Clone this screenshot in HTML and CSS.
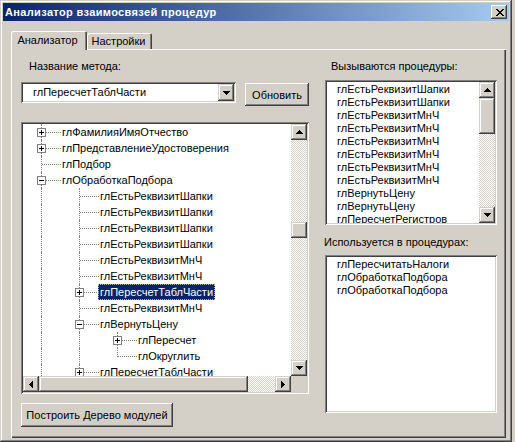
FILE: index.html
```html
<!DOCTYPE html>
<html lang="ru">
<head>
<meta charset="utf-8">
<title>Анализатор взаимосвязей процедур</title>
<link rel="stylesheet" href="styles.css">
</head>
<body>
<div class="window">
  <div class="titlebar">
    <span class="title">Анализатор взаимосвязей процедур</span>
    <span class="close"><svg width="8" height="7" viewBox="0 0 8 7" shape-rendering="crispEdges"><path d="M0 0h2v1H0zM6 0h2v1H6zM1 1h2v1H1zM5 1h2v1H5zM2 2h4v1H2zM3 3h2v1H3zM2 4h4v1H2zM1 5h2v1H1zM5 5h2v1H5zM0 6h2v1H0zM6 6h2v1H6z"/></svg></span>
  </div>
  <div class="client">
    <div class="tabs">
      <div class="tab active">Анализатор</div>
      <div class="tab">Настройки</div>
    </div>
    <div class="panel">
      <div class="left">
        <div class="label">Название метода:</div>
        <div class="combo-row">
          <div class="combo sunken">
            <span class="combo-text">глПересчетТаблЧасти</span>
            <span class="sbtn dd"><svg width="7" height="4" viewBox="0 0 7 4" shape-rendering="crispEdges"><path d="M0 0h7v1H6v1H5v1H4v1H3V3H2V2H1V1H0z"/></svg></span>
          </div>
          <div class="btn refresh">Обновить</div>
        </div>
        <div class="tree sunken">
          <div class="tree-main">
            <div class="rows">
              <div class="row"><span class="cell vf c"><i class="box plus"></i></span><span class="txt">глФамилияИмяОтчество</span></div>
              <div class="row"><span class="cell vf c"><i class="box plus"></i></span><span class="txt">глПредставлениеУдостоверения</span></div>
              <div class="row"><span class="cell vf c"></span><span class="txt">глПодбор</span></div>
              <div class="row"><span class="cell vf c"><i class="box"></i></span><span class="txt">глОбработкаПодбора</span></div>
              <div class="row"><span class="cell vf"></span><span class="cell vf c"></span><span class="txt">глЕстьРеквизитШапки</span></div>
              <div class="row"><span class="cell vf"></span><span class="cell vf c"></span><span class="txt">глЕстьРеквизитШапки</span></div>
              <div class="row"><span class="cell vf"></span><span class="cell vf c"></span><span class="txt">глЕстьРеквизитШапки</span></div>
              <div class="row"><span class="cell vf"></span><span class="cell vf c"></span><span class="txt">глЕстьРеквизитШапки</span></div>
              <div class="row"><span class="cell vf"></span><span class="cell vf c"></span><span class="txt">глЕстьРеквизитМнЧ</span></div>
              <div class="row"><span class="cell vf"></span><span class="cell vf c"></span><span class="txt">глЕстьРеквизитМнЧ</span></div>
              <div class="row"><span class="cell vf"></span><span class="cell vf c"><i class="box plus"></i></span><span class="txt sel">глПересчетТаблЧасти</span></div>
              <div class="row"><span class="cell vf"></span><span class="cell vf c"></span><span class="txt">глЕстьРеквизитМнЧ</span></div>
              <div class="row"><span class="cell vf"></span><span class="cell vf c"><i class="box"></i></span><span class="txt">глВернутьЦену</span></div>
              <div class="row"><span class="cell vf"></span><span class="cell vf"></span><span class="cell vf c"><i class="box plus"></i></span><span class="txt">глПересчет</span></div>
              <div class="row"><span class="cell vf"></span><span class="cell vf"></span><span class="cell vh c"></span><span class="txt">глОкруглить</span></div>
              <div class="row"><span class="cell vf"></span><span class="cell vf c"><i class="box plus"></i></span><span class="txt">глПересчетТаблЧасти</span></div>
            </div>
            <div class="vscroll">
              <span class="sbtn"><svg width="7" height="4" viewBox="0 0 7 4" shape-rendering="crispEdges"><path d="M3 0h1v1h1v1h1v1h1v1H0V3h1V2h1V1h1z"/></svg></span>
              <div class="track vtrack"><span class="thumb tree-thumb"></span></div>
              <span class="sbtn"><svg width="7" height="4" viewBox="0 0 7 4" shape-rendering="crispEdges"><path d="M0 0h7v1H6v1H5v1H4v1H3V3H2V2H1V1H0z"/></svg></span>
            </div>
          </div>
          <div class="hrow">
            <div class="hscroll">
              <span class="sbtn"><svg width="4" height="7" viewBox="0 0 4 7" shape-rendering="crispEdges"><path d="M3 0h1v7H3V6H2V5H1V4H0V3h1V2h1V1h1z"/></svg></span>
              <span class="thumb hthumb"></span>
              <span class="track htrack"></span>
              <span class="sbtn"><svg width="4" height="7" viewBox="0 0 4 7" shape-rendering="crispEdges"><path d="M0 0h1v1h1v1h1v1h1v1H3v1H2v1H1v1H0z"/></svg></span>
            </div>
            <div class="corner"></div>
          </div>
        </div>
        <div class="btn build">Построить Дерево модулей</div>
      </div>
      <div class="right">
        <div class="label indent">Вызываются процедуры:</div>
        <div class="list sunken list1">
          <div class="items">
            <div>глЕстьРеквизитШапки</div>
            <div>глЕстьРеквизитШапки</div>
            <div>глЕстьРеквизитМнЧ</div>
            <div>глЕстьРеквизитМнЧ</div>
            <div>глЕстьРеквизитМнЧ</div>
            <div>глЕстьРеквизитМнЧ</div>
            <div>глЕстьРеквизитМнЧ</div>
            <div>глЕстьРеквизитМнЧ</div>
            <div>глВернутьЦену</div>
            <div>глВернутьЦену</div>
            <div>глПересчетРегистров</div>
          </div>
          <div class="vscroll">
            <span class="sbtn"><svg width="7" height="4" viewBox="0 0 7 4" shape-rendering="crispEdges"><path d="M3 0h1v1h1v1h1v1h1v1H0V3h1V2h1V1h1z"/></svg></span>
            <div class="track vtrack"><span class="thumb list-thumb"></span></div>
            <span class="sbtn"><svg width="7" height="4" viewBox="0 0 7 4" shape-rendering="crispEdges"><path d="M0 0h7v1H6v1H5v1H4v1H3V3H2V2H1V1H0z"/></svg></span>
          </div>
        </div>
        <div class="label label2">Используется в процедурах:</div>
        <div class="list sunken list2">
          <div class="items">
            <div>глПересчитатьНалоги</div>
            <div>глОбработкаПодбора</div>
            <div>глОбработкаПодбора</div>
          </div>
        </div>
      </div>
    </div>
  </div>
</div>
</body>
</html>
```

FILE: styles.css
```css
* { box-sizing: border-box; }
html, body { margin: 0; padding: 0; }
body {
  width: 515px;
  height: 442px;
  overflow: hidden;
  background: #d4d0c8;
  font-family: "Liberation Sans", Arial, sans-serif;
  font-size: 11px;
  color: #000;
}
.window {
  width: 512px;
  height: 442px;
  padding: 3px;
  background: #d4d0c8;
  box-shadow: inset -1px -1px #404040, inset 1px 1px #d4d0c8, inset -2px -2px #808080, inset 2px 2px #fff;
  display: flex;
  flex-direction: column;
}
.titlebar {
  flex: none;
  height: 18px;
  display: flex;
  align-items: center;
  justify-content: space-between;
  padding: 0 2px;
  background: linear-gradient(to right, #0a246a, #a6caf0);
}
.title {
  color: #fff;
  font-weight: bold;
  font-size: 11px;
  letter-spacing: 0.35px;
}
.close {
  width: 16px;
  height: 14px;
  display: flex;
  align-items: center;
  justify-content: center;
  padding-left: 1px;
  background: #d4d0c8;
  box-shadow: inset -1px -1px #404040, inset 1px 1px #fff, inset -2px -2px #808080;
}
.client {
  flex: 1;
  padding: 10px 0 0 8px;
  display: flex;
  flex-direction: column;
}
.tabs {
  flex: none;
  height: 19px;
  margin-bottom: -1px;
  display: flex;
  align-items: flex-start;
  position: relative;
  z-index: 1;
}
.tab {
  height: 16px;
  margin-top: 2px;
  width: 65px;
  line-height: 16px;
  text-align: center;
  padding-right: 2px;
  background: #d4d0c8;
  border-radius: 2px 2px 0 0;
  box-shadow: inset 1px 1px #fff, inset -1px 0 #404040, inset -2px 0 #808080;
}
.tab.active {
  height: 19px;
  margin-top: 0;
  width: 76px;
  line-height: 18px;
  padding-right: 3px;
}
.panel {
  flex: none;
  width: 495px;
  height: 389px;
  padding: 11px 9px 0 10px;
  display: flex;
  box-shadow: inset 1px 1px #fff, inset -1px -1px #404040, inset -2px -2px #808080;
}
.left {
  width: 288px;
  display: flex;
  flex-direction: column;
}
.right {
  width: 172px;
  margin-left: 16px;
  display: flex;
  flex-direction: column;
}
.label {
  height: 13px;
  line-height: 13px;
  padding-left: 8px;
}
.label.indent { padding-left: 6px; }
.label2 { margin-top: 11px; padding-left: 0; margin-left: -1px; }
.sunken {
  background: #fff;
  padding: 2px;
  box-shadow: inset 1px 1px #808080, inset -1px -1px #fff, inset 2px 2px #404040, inset -2px -2px #d4d0c8;
}
.combo-row {
  margin-top: 9px;
  height: 24px;
  display: flex;
  align-items: flex-start;
}
.combo {
  width: 215px;
  height: 21px;
  display: flex;
  align-items: stretch;
}
.combo-text {
  flex: 1;
  padding-left: 10px;
  line-height: 17px;
}
.sbtn {
  flex: none;
  width: 16px;
  height: 16px;
  display: flex;
  align-items: center;
  justify-content: center;
  background: #d4d0c8;
  box-shadow: inset -1px -1px #404040, inset 1px 1px #d4d0c8, inset -2px -2px #808080, inset 2px 2px #fff;
}
.sbtn.dd { height: 17px; }
.btn {
  display: flex;
  align-items: center;
  justify-content: center;
  background: #d4d0c8;
  box-shadow: inset -1px -1px #404040, inset 1px 1px #fff, inset -2px -2px #808080;
}
.refresh {
  width: 64px;
  height: 23px;
  margin-top: 1px;
  margin-left: 9px;
}
.build {
  width: 152px;
  height: 24px;
  margin-top: 9px;
}
.tree {
  margin-top: 16px;
  height: 272px;
  display: flex;
  flex-direction: column;
}
.tree-main {
  height: 252px;
  display: flex;
}
.rows {
  flex: 1;
  overflow: hidden;
}
.row {
  height: 16px;
  display: flex;
  white-space: nowrap;
}
.cell {
  position: relative;
  flex: none;
  width: 38px;
  height: 16px;
}
.vf::before, .vh::before {
  content: "";
  position: absolute;
  left: 18px;
  top: 0;
  height: 16px;
  border-left: 1px dotted #808080;
}
.vh::before { height: 9px; }
.c::after {
  content: "";
  position: absolute;
  left: 19px;
  top: 8px;
  width: 19px;
  border-top: 1px dotted #808080;
}
.box {
  position: absolute;
  left: 14px;
  top: 4px;
  z-index: 1;
  width: 9px;
  height: 9px;
  border: 1px solid #808080;
  background: linear-gradient(#000, #000) 1px 3px / 5px 1px no-repeat, #fff;
}
.box.plus {
  background: linear-gradient(#000, #000) 1px 3px / 5px 1px no-repeat,
              linear-gradient(#000, #000) 3px 1px / 1px 5px no-repeat, #fff;
}
.txt {
  line-height: 16px;
  height: 16px;
  margin-left: -1px;
  padding: 0 2px;
}
.txt.sel {
  background: #0a246a;
  color: #fff;
  outline: 1px dotted #b8b4ac;
  outline-offset: -1px;
}
.vscroll {
  width: 16px;
  flex: none;
  display: flex;
  flex-direction: column;
}
.track {
  background-color: #fff;
  background-image: repeating-conic-gradient(#d4d0c8 0 25%, #fff 0 50%);
  background-size: 2px 2px;
}
.vtrack {
  flex: 1;
  display: flex;
  flex-direction: column;
}
.thumb {
  flex: none;
  background: #d4d0c8;
  box-shadow: inset -1px -1px #404040, inset 1px 1px #d4d0c8, inset -2px -2px #808080, inset 2px 2px #fff;
}
.tree-thumb { height: 16px; margin-top: 82px; }
.list-thumb { height: 36px; }
.hrow {
  height: 16px;
  display: flex;
}
.hscroll {
  flex: 1;
  display: flex;
}
.hthumb { width: 209px; height: 16px; }
.htrack { flex: 1; }
.corner {
  width: 16px;
  background: #d4d0c8;
}
.list {
  display: flex;
}
.list1 {
  margin-top: 7px;
  height: 145px;
}
.list2 {
  margin-top: 6px;
  height: 158px;
}
.items {
  flex: 1;
  overflow: hidden;
  padding: 1px 0 0 10px;
  line-height: 13px;
  white-space: nowrap;
}
```
